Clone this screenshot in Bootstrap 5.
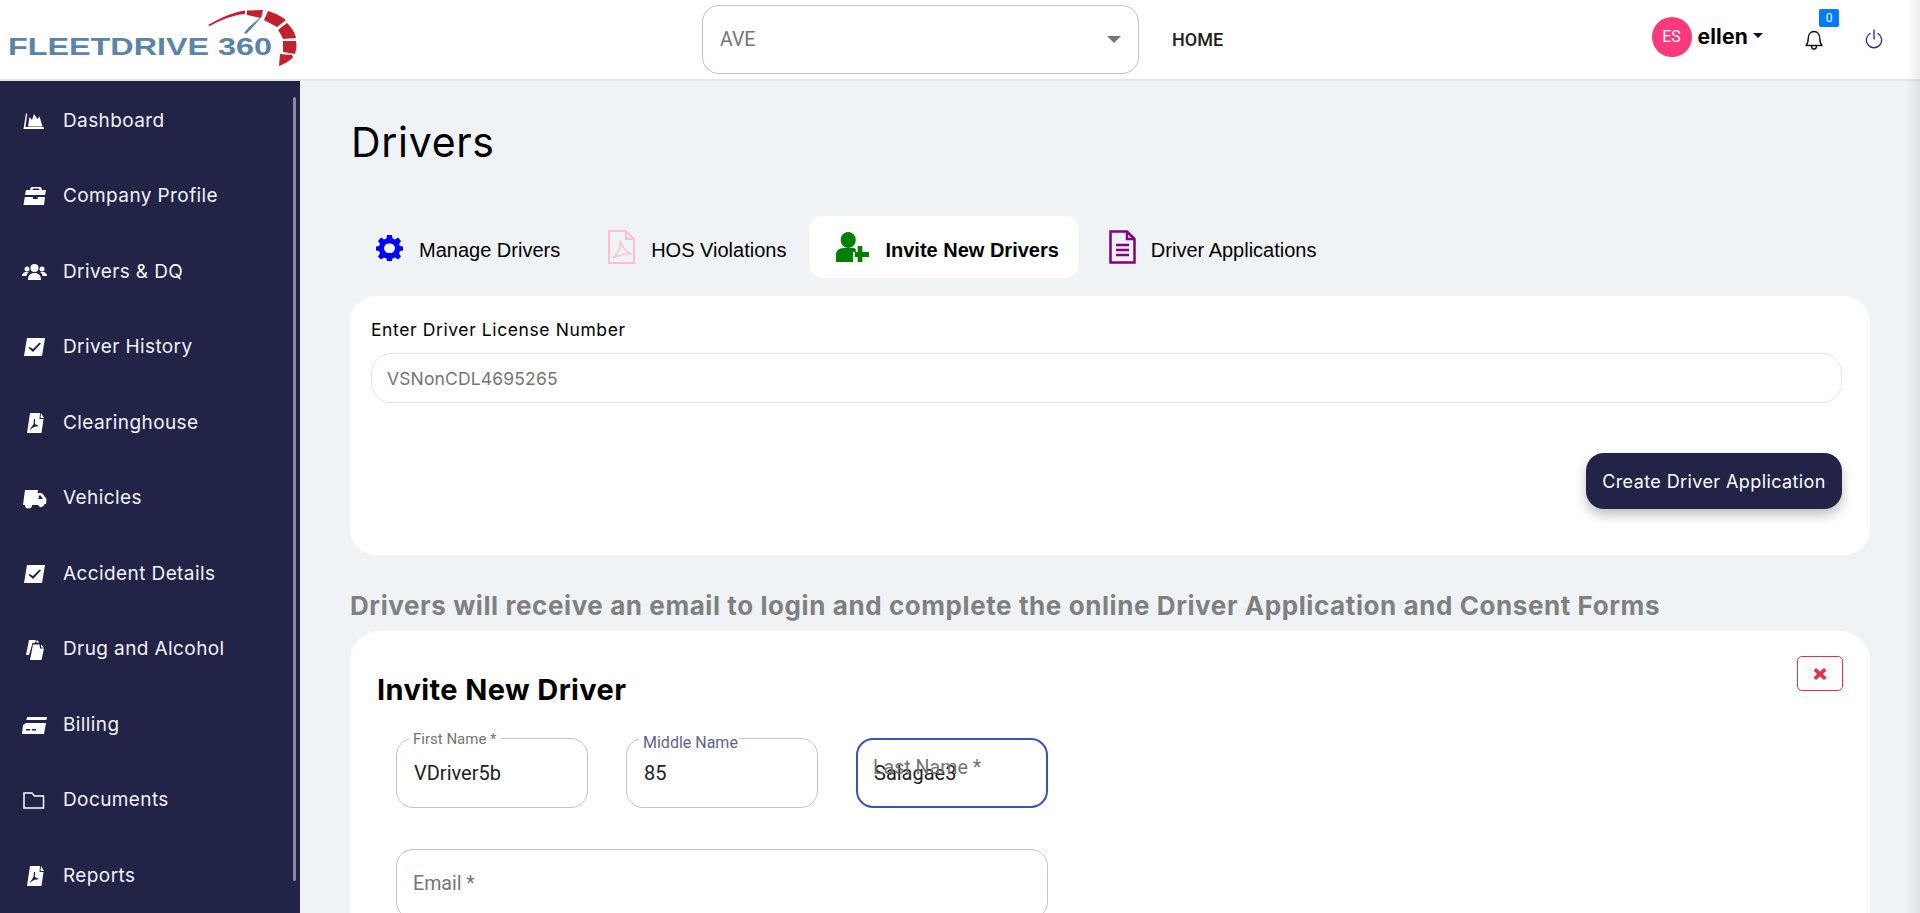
<!DOCTYPE html>
<html lang="en"><head><meta charset="utf-8"><title>Drivers</title>
<link href="https://cdn.jsdelivr.net/npm/bootstrap@5.3.0/dist/css/bootstrap.min.css" rel="stylesheet">
<style>
html,body{height:913px;overflow:hidden}
body{background:#eff3f6;font-family:"Inter","Liberation Sans",sans-serif;color:#000;position:relative}
.top-bar{height:81px;background:#fff;border-bottom:2px solid #e3e7ea;padding:0}
.brand-box{width:300px;height:80px;flex:none}
.org-select{width:437px;height:69px;margin-left:402px;margin-top:0;border:1px solid #c4c4c4;border-radius:17px;padding:0 17px;font:19.5px "Roboto",sans-serif;color:#757575}
.sel-caret{width:0;height:0;border:7px solid transparent;border-top:7px solid #757575;border-bottom:0}
.home-link{margin-left:33px;margin-top:0;font:500 18px "Roboto",sans-serif;color:#212121;text-decoration:none}
.user-zone{margin-left:auto;margin-right:37px;margin-top:-6px}
.avatar-dot{width:40px;height:40px;border-radius:50%;background:#fb3a7c;color:#fff;font:16px "Roboto",sans-serif}
.user-name{font-weight:700;font-size:21px;margin-left:6px;letter-spacing:.2px}
.user-caret{width:0;height:0;border:5px solid transparent;border-top:5px solid #111;border-bottom:0;margin:0 0 2px 5px}
.bell-box{margin-left:42px;width:18px;height:22px;position:relative;margin-top:1px}
.bell-count{position:absolute;left:14px;top:-17px;width:20px;height:18px;background:#007bff;color:#fff;border-radius:2px;font:12px/18px "Roboto",sans-serif;text-align:center}
.power-box{margin-left:42px;margin-top:1px}
.shell{height:832px}
.side-nav{width:300px;flex:none;background:#212447;position:relative;padding-top:2px;height:832px;overflow:hidden}
.side-thumb{position:absolute;right:4px;top:16px;height:784px;width:3px;background:#8a8b96;border-radius:2px}
.side-item{height:75.55px;padding-left:22px;color:#f2f2f5;text-decoration:none;font-size:19px;letter-spacing:.4px;font-weight:400}
.side-item svg{width:25px;height:22px;flex:none;margin-right:16px;fill:#fff}
.main-pane{flex:1;padding:0 50px;overflow:hidden}
.page-title{font-size:41px;font-weight:400;letter-spacing:.7px;line-height:1;margin:41px 0 0 1px;height:46px}
.tab-row{margin:48px 0 0 2px;height:62px}
.tab-link{height:62px;padding:7px 24px 0;font:20px "Liberation Sans",sans-serif;color:#000;text-decoration:none;border-radius:14px}
.tab-link svg{margin-right:16px;margin-bottom:7px;flex:none}
.tab-link.tight{padding-right:23px}
.tab-link.is-on{background:#fff;font-weight:700;padding-right:20px;padding-left:26px}
.tab-link.is-last{padding-left:30px}
.tab-link.is-last svg{margin-right:15px}
.white-box{background:#fff;border-radius:26px}
.lookup-box{margin-top:18px;height:259px;padding:23px 28px 0 21px}
.field-cap{font-size:17.5px;letter-spacing:.6px;line-height:22px;margin-bottom:12px}
.lookup-input{height:50px;border:1px solid #e0e4e8;border-radius:20px;padding:0 15px;font-size:17.5px;letter-spacing:.15px;color:#757575}
.lookup-input::placeholder{color:#757575}
.dark-btn{height:56px;width:256px;margin-top:50px;background:#212447;color:#fff;border:0;border-radius:18px;font-size:18px;box-shadow:0 6px 12px rgba(0,0,0,.25);letter-spacing:.4px;padding:0;white-space:nowrap}
.note-line{font-size:26px;font-weight:700;color:#808080;margin:35px 0 0;line-height:32px;letter-spacing:.58px;white-space:nowrap}
.invite-box{margin-top:9px;height:400px;border-radius:30px;padding:24px 27px 0 27px;position:relative}
.invite-title{font-size:29px;font-weight:700;line-height:34px;margin:18px 0 0;letter-spacing:.4px}
.close-mini{position:absolute;right:27px;top:25px;width:46px;height:35px;padding:0;border:1px solid #dc3545;border-radius:5px;background:#fff}
.name-row{margin:31px 0 0 19px;gap:38px}
.float-wrap{position:relative;width:192px}
.float-wrap.wide{width:652px;margin:41px 0 0 19px}
.mat-input{height:70px;border:1px solid #c4c4c4;border-radius:17px;padding:0 17px;font-size:20px;font-family:"Roboto",sans-serif;color:#212121}
.mat-input.on{border:2px solid #3f51b5;padding:0 16px;box-shadow:none}
.mat-label{position:absolute;left:13px;top:-7px;background:#fff;padding:0 4px;font:15px/16px "Roboto",sans-serif;color:#757575}
.mat-label.blue{color:#5f6488;top:-3px;padding:0 1px 0 4px;font-size:16px}
.mat-label.rest{top:18px;font-size:19.6px;line-height:24px;background:transparent;left:13px}
.mat-label.rest.low{top:23px}
.edge-fade{position:absolute;top:0;right:0;width:14px;height:913px;background:linear-gradient(90deg,rgba(0,0,0,0),rgba(0,0,0,.07));pointer-events:none}
</style></head>
<body>
<nav class="navbar top-bar d-flex align-items-center flex-nowrap">
  <div class="brand-box d-flex align-items-center">
    <svg width="300" height="80" viewBox="0 0 300 80">
      <text x="8" y="55" font-family="Liberation Sans" font-weight="700" font-size="24" fill="#5b84a8" textLength="264" lengthAdjust="spacingAndGlyphs">FLEETDRIVE 360</text>
      <path d="M208 25C222 17 234 12 245 10.500L245 14C234 15 222 19 210 26Z" fill="#c3202e"/>
      <path d="M247 10.500L263 10 261 18 247 15Z" fill="#c3202e"/>
      <path d="M268 11C275 13 281 16 286 20L277 27 264 20Z" fill="#c3202e"/>
      <path d="M287 23C291 27 295 32 296 38L283 39C282 36 280 33 278 30Z" fill="#c3202e"/>
      <path d="M296 41C297 46 296 50 295 54L283 52 283 41Z" fill="#c3202e"/>
      <path d="M293 57C291 60 286 63 279 66L280 54 292 55Z" fill="#c3202e"/>
      <path d="M265 13L252 28 246 34 244 33 249 27Z" fill="#5b84a8"/>
    </svg>
  </div>
  <div class="org-select d-flex align-items-center justify-content-between">AVE<span class="sel-caret"></span></div>
  <a class="home-link" href="#">HOME</a>
  <div class="user-zone d-flex align-items-center">
    <span class="avatar-dot d-flex align-items-center justify-content-center">ES</span>
    <span class="user-name">ellen</span><span class="user-caret"></span>
    <div class="bell-box"><svg width="18" height="20" viewBox="0 0 18 20" fill="none" stroke="#111" stroke-width="1.400"><path d="M1 15.500C3 13.500 3.200 11 3.200 8.500C3.200 4.500 5.500 1.500 9 1.500S14.800 4.500 14.800 8.500C14.800 11 15 13.500 17 15.500Z" stroke-linejoin="round"/><path d="M6.500 16C6.500 18 7.500 19 9 19S11.500 18 11.500 16"/></svg><span class="bell-count">0</span></div>
    <div class="power-box"><svg width="18" height="20" viewBox="0 0 18 20" fill="none" stroke="#2f3488" stroke-width="1.400" stroke-linecap="round"><path d="M9 1V10"/><path d="M5 4.500A7.700 7.700 0 1 0 13 4.500"/></svg></div>
  </div>
</nav>
<div class="shell d-flex">
  <aside class="side-nav">
    <a class="side-item d-flex align-items-center" href="#"><svg viewBox="0 0 25 22"><path d="M4 3.500H5.200L3.500 17H21.500L22 19H1.500Z"/><path d="M6 16.500 7.500 7 10 10 12 4 15.500 9 17.500 6.500 20.500 16.500Z"/></svg>Dashboard</a>
    <a class="side-item d-flex align-items-center" href="#"><svg viewBox="0 0 25 22"><path d="M8 5 9 2H19L20 5H24L23 10H3L4 5ZM10.500 5H17.500L17 3.500H11ZM2.800 12H11L10.800 14H15.500L15.700 12H23L22 20H1.500Z"/></svg>Company Profile</a>
    <a class="side-item d-flex align-items-center" href="#"><svg viewBox="0 0 25 22"><circle cx="12.500" cy="7" r="4"/><circle cx="5" cy="8" r="2.500"/><circle cx="20" cy="8" r="2.500"/><path d="M6 19C6 14 8.500 12 12.500 12S19 14 19 19ZM0 15C0 12 2 11 4 11H7C5.500 12 4.500 13.500 4.500 15ZM25 15C25 12 23 11 21 11H18C19.500 12 20.500 13.500 20.500 15Z"/></svg>Drivers &amp; DQ</a>
    <a class="side-item d-flex align-items-center" href="#"><svg viewBox="0 0 25 22"><path fill-rule="evenodd" d="M5 2H23L20 20H2ZM7.500 11 6.500 12 11 16 19 7.500 17.500 6.500 11 13Z"/></svg>Driver History</a>
    <a class="side-item d-flex align-items-center" href="#"><svg viewBox="0 0 25 22"><path fill-rule="evenodd" d="M8 1H18L17.500 7H21.500L19.500 21H5ZM19 1 22 6H18.500ZM12 7 11.500 12 7.500 18 12 15 17 14 13 12 13 7Z"/></svg>Clearinghouse</a>
    <a class="side-item d-flex align-items-center" href="#"><svg viewBox="0 0 25 22"><path fill-rule="evenodd" d="M3 2H16L15.500 5H20L24.500 11 24 16H22.500A3.500 3.500 0 0 1 16 17H10A3.500 3.500 0 0 1 3 17H1ZM17 7.500 16.500 11H21L18.500 7.500Z"/><circle cx="6.500" cy="17.500" r="1.800"/><circle cx="19" cy="17.500" r="1.800"/></svg>Vehicles</a>
    <a class="side-item d-flex align-items-center" href="#"><svg viewBox="0 0 25 22"><path fill-rule="evenodd" d="M5 2H23L20 20H2ZM7.500 11 6.500 12 11 16 19 7.500 17.500 6.500 11 13Z"/></svg>Accident Details</a>
    <a class="side-item d-flex align-items-center" href="#"><svg viewBox="0 0 25 22"><path d="M7 1H14L13 4H10.500L7 16H4ZM15 1 17.500 3.500H14ZM11 5.500H17.500L18 9.500H22L19.500 21H8ZM19 5.500 22 8.500H19Z"/></svg>Drug and Alcohol</a>
    <a class="side-item d-flex align-items-center" href="#"><svg viewBox="0 0 25 22"><path fill-rule="evenodd" d="M5 3H25L24.400 6H4.400ZM4 9H24L22 20H0L1 11ZM4 15 3.700 16.500H8L8.300 15ZM10 15 9.700 16.500H14L14.300 15Z"/></svg>Billing</a>
    <a class="side-item d-flex align-items-center" href="#"><svg viewBox="0 0 25 22" fill="none" style="fill:none" stroke="#fff" stroke-width="1.500"><path d="M2 3H10L12.500 6H21.500V18H2Z"/></svg>Documents</a>
    <a class="side-item d-flex align-items-center" href="#"><svg viewBox="0 0 25 22"><path fill-rule="evenodd" d="M8 1H18L17.500 7H21.500L19.500 21H5ZM19 1 22 6H18.500ZM12 7 11.500 12 7.500 18 12 15 17 14 13 12 13 7Z"/></svg>Reports</a>
    <span class="side-thumb"></span>
  </aside>
  <main class="main-pane">
    <h1 class="page-title">Drivers</h1>
    <div class="tab-row d-flex">
      <a class="tab-link d-flex align-items-center" href="#"><svg width="27" height="27" viewBox="0 0 27 27" fill="#00f"><path fill-rule="evenodd" d="M11 1H16L16.500 4.500 19 5.500 22 3.500 25 7 23 10 24 12 27 12.500V16.500L24 17 23 19.500 25 22.500 22 25.500 19 23.500 16.500 24.500 16 27H11L10.500 24.500 8 23.500 5 25.500 2 22.500 4 19.500 3 17 0 16.500V12.500L3 12 4 10 2 7 5 3.500 8 5.500 10.500 4.500ZM13.500 9.500A4.800 4.800 0 1 0 13.500 19 4.800 4.800 0 1 0 13.500 9.500Z"/></svg>Manage Drivers</a>
      <a class="tab-link tight d-flex align-items-center" href="#"><svg width="27" height="34" viewBox="0 0 27 34" fill="none" stroke="#ffc0cb" stroke-width="2"><path d="M1 1H18L26 9V33H1Z"/><path d="M18 1V9H26"/><path d="M12 11C13 16 11 22 5 28C11 25 16 23 23 24C17 21 14 17 12 11Z" stroke-width="1.500"/></svg>HOS Violations</a>
      <a class="tab-link is-on d-flex align-items-center" href="#"><svg width="34" height="30" viewBox="0 0 36 30" preserveAspectRatio="none" fill="#008000"><circle cx="14" cy="8" r="8"/><path d="M1 30V23C1 19 4 16 9 16H19C20 16 21 16.500 22 17V20H19V30ZM24 14H29V20H36V25H29V30H24V25H21V20H24Z"/></svg>Invite New Drivers</a>
      <a class="tab-link is-last d-flex align-items-center" href="#"><svg width="27" height="34" viewBox="0 0 27 34" fill="none" stroke="#800080" stroke-width="2.500"><path d="M1.500 1.500H18L25.500 9V32.500H1.500Z"/><path d="M18 1.500V9H25.500"/><path d="M7 15H20M7 20H20M7 25H20"/></svg>Driver Applications</a>
    </div>
    <section class="white-box lookup-box">
      <div class="field-cap">Enter Driver License Number</div>
      <input class="form-control lookup-input" placeholder="VSNonCDL4695265">
      <div class="d-flex justify-content-end"><button class="btn dark-btn" type="button">Create Driver Application</button></div>
    </section>
    <p class="note-line">Drivers will receive an email to login and complete the online Driver Application and Consent Forms</p>
    <section class="white-box invite-box">
      <button class="close-mini d-flex align-items-center justify-content-center" type="button" aria-label="Close"><svg width="14" height="14" viewBox="0 0 14 14"><path d="M3 1 7 4.500 11 1 13.500 3.500 10 7 13.500 10.500 11 13 7 9.500 3 13 .500 10.500 4 7 .500 3.500Z" fill="#dc3545"/></svg></button>
      <h2 class="invite-title">Invite New Driver</h2>
      <div class="d-flex name-row">
        <div class="float-wrap"><input class="form-control mat-input" value="VDriver5b"><label class="mat-label">First Name *</label></div>
        <div class="float-wrap"><input class="form-control mat-input" value="85"><label class="mat-label blue">Middle Name</label></div>
        <div class="float-wrap"><input class="form-control mat-input on" value="Salagae3"><label class="mat-label rest">Last Name *</label></div>
      </div>
      <div class="float-wrap wide"><input class="form-control mat-input"><label class="mat-label rest low">Email *</label></div>
    </section>
  </main>
</div>
<div class="edge-fade"></div>
<script src="https://cdn.jsdelivr.net/npm/bootstrap@5.3.0/dist/js/bootstrap.bundle.min.js"></script>
</body></html>
